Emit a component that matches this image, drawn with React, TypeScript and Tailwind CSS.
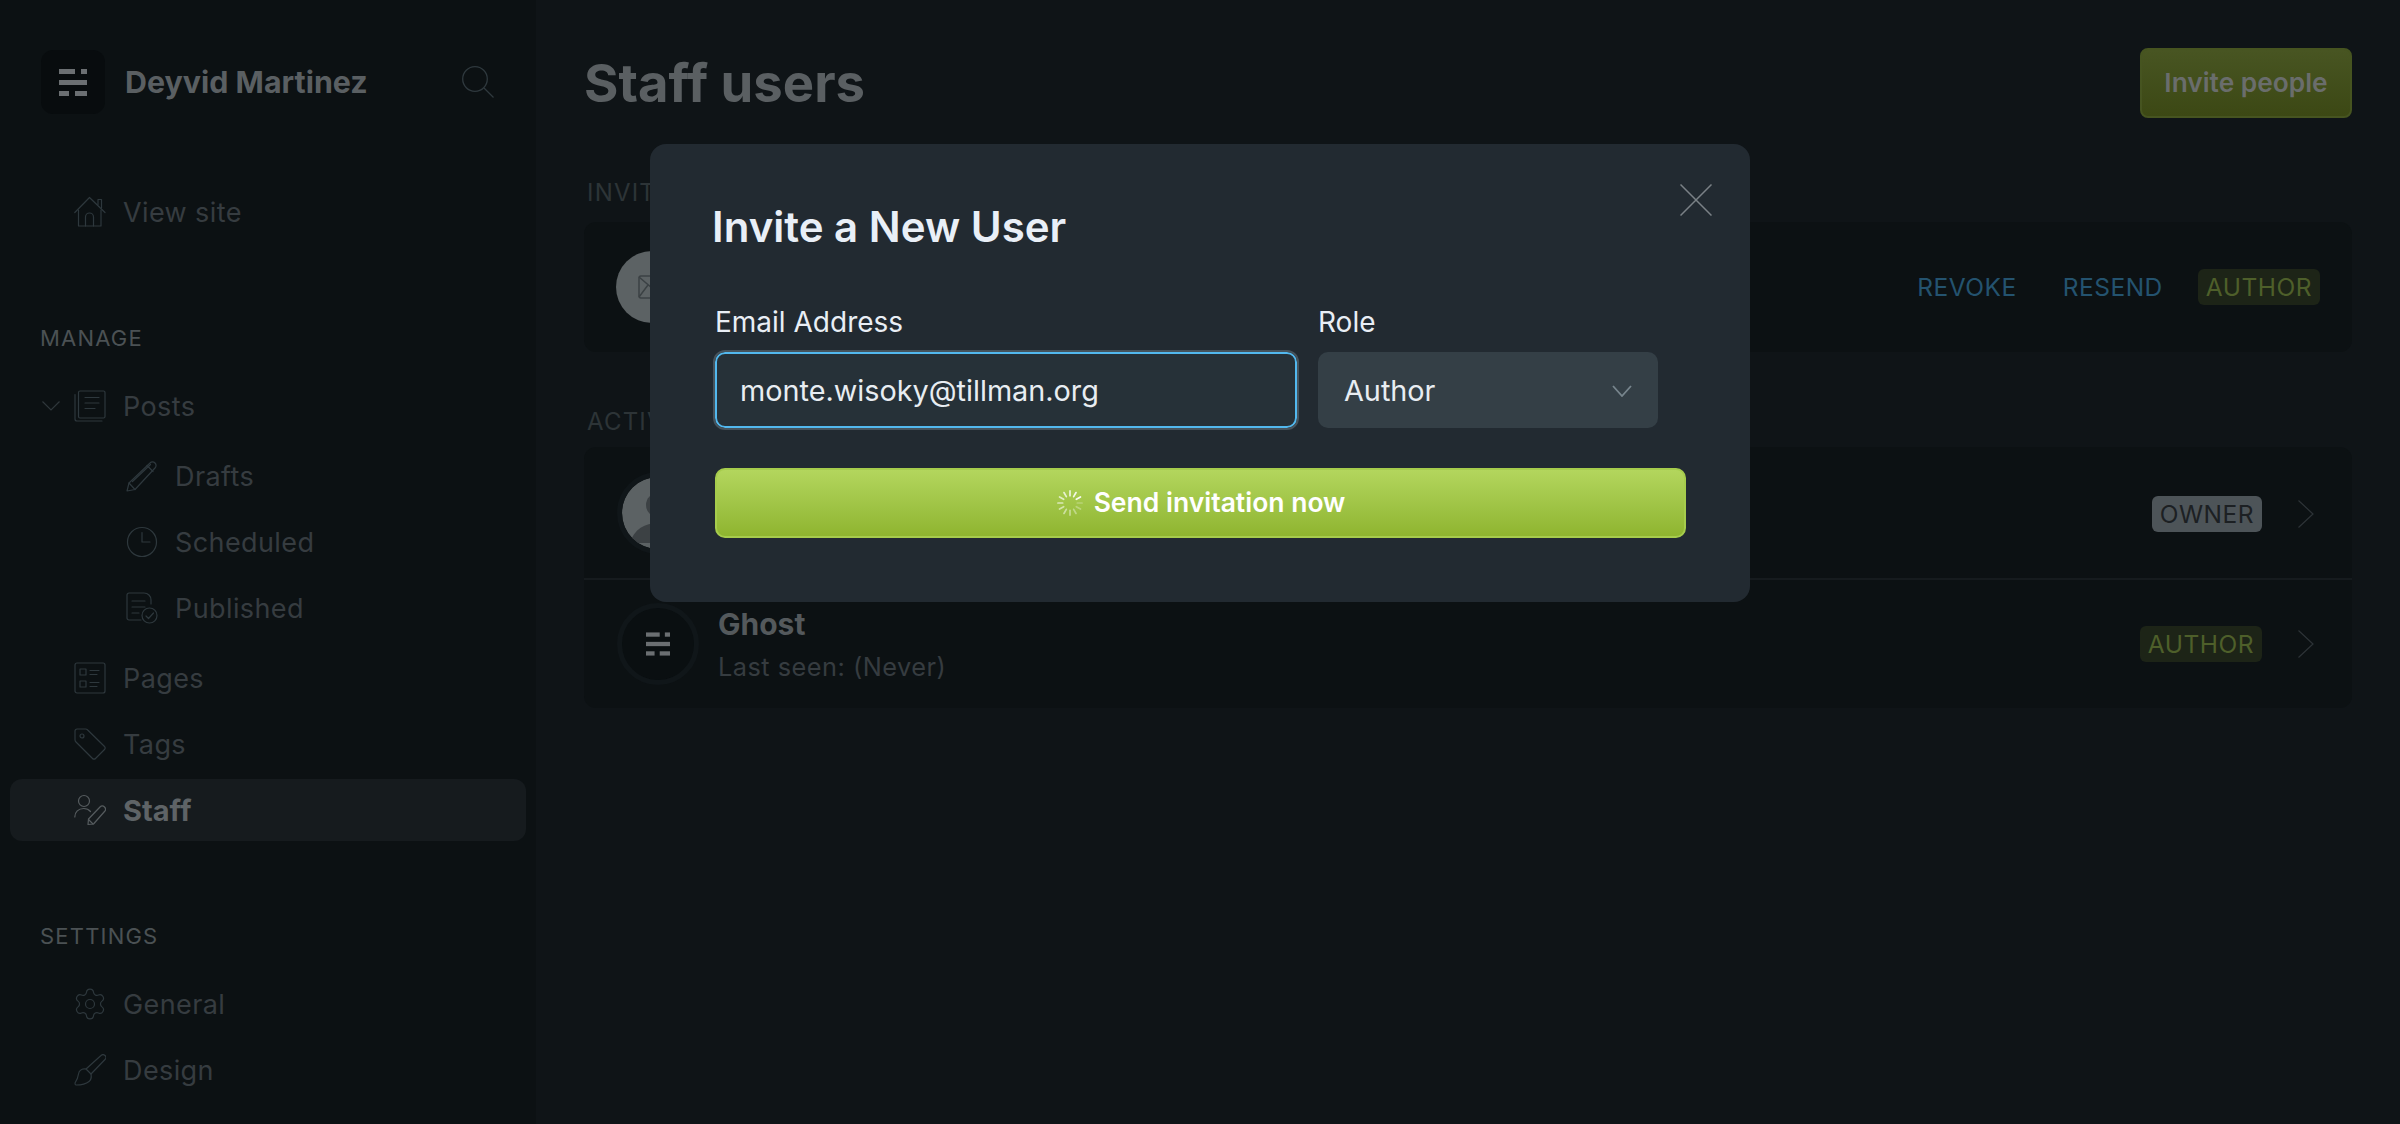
import React from 'react';
import { Settings } from 'lucide-react';

const Icon = ({ children, className = 'w-8 h-8' }: { children: React.ReactNode; className?: string }) => (
  <svg viewBox="0 0 32 32" fill="none" stroke="currentColor" strokeWidth="1.200" strokeLinecap="round" strokeLinejoin="round" className={`shrink-0 ${className}`}>
    {children}
  </svg>
);

const GhostMark = ({ className }: { className: string }) => (
  <svg viewBox="0 0 28 27" fill="currentColor" className={className}>
    <rect x="0" y="0" width="16" height="5" />
    <rect x="22" y="0" width="6" height="5" />
    <rect x="0" y="11" width="28" height="5" />
    <rect x="0" y="22" width="10" height="5" />
    <rect x="16" y="22" width="12" height="5" />
  </svg>
);

const HomeIcon = () => (
  <Icon>
    <path d="M0.800 16.500 15.500 1.500 31 16.500" />
    <path d="M24 8.500V3.500h3.500V12" />
    <path d="M4.500 14v16h22.500V14" />
    <path d="M11.500 30V21a4 4 0 0 1 8 0v9" />
  </Icon>
);
const PostsIcon = () => (
  <Icon>
    <rect x="4.500" y="1" width="26.500" height="27" rx="1.500" />
    <path d="M1 4.500V29a2 2 0 0 0 2 2h25" />
    <path d="M11 7.500h14M11 13h14M11 18.500h10" />
  </Icon>
);
const PenIcon = () => (
  <Icon>
    <path d="M1 31 3 23 24 3a3.500 3.500 0 0 1 5 0 3.500 3.500 0 0 1 0 5L9 29.500z" />
    <path d="M3 23 9 29.500M21 5.500 27 11.500M6.500 21.500 24.500 4.500" />
  </Icon>
);
const ClockIcon = () => (
  <Icon>
    <circle cx="16" cy="16" r="14.500" />
    <path d="M16 6.500V16h8" />
  </Icon>
);
const PublishedIcon = () => (
  <Icon>
    <path d="M15 28H3a2 2 0 0 1-2-2V3a2 2 0 0 1 2-2h15c4 0 7 3 7 7v4" />
    <path d="M6 9h13M6 15h13M6 21h7" />
    <circle cx="23.500" cy="23.500" r="7.500" />
    <path d="m20 24 2.500 2.500 5-5.500" />
  </Icon>
);
const PagesIcon = () => (
  <Icon>
    <rect x="1" y="1" width="30" height="30" rx="2" />
    <rect x="6" y="7" width="6" height="6" />
    <rect x="6" y="19" width="6" height="6" />
    <path d="M16 8.500h9M16 12.500h7M16 20.500h9M16 24.500h7" />
  </Icon>
);
const TagIcon = () => (
  <Icon>
    <path d="M1 3a2 2 0 0 1 2-2h8.500a3 3 0 0 1 2.200 1L30.500 18.500a2 2 0 0 1 0 3L21.500 30.500a2 2 0 0 1-3 0L2 14a3 3 0 0 1-1-2.200z" />
    <circle cx="8" cy="8" r="2" />
  </Icon>
);
const StaffIcon = () => (
  <Icon>
    <circle cx="10" cy="7" r="5.500" />
    <path d="M0.800 23c0-5 3.500-8.500 9-8.500 3 0 5 1 6.700 3" />
    <path d="M14 30.500l.5-5.500L26 13a3 3 0 0 1 4.500 4.500L19.500 30z" />
    <path d="M14.500 25.500 19 30" />
  </Icon>
);
const BrushIcon = () => (
  <Icon>
    <path d="M27 1.500a2.800 2.800 0 0 1 4 4L17 20l-5-5z" />
    <path d="M12 15c-4-.5-7 1.500-7.500 5-.4 3-1.500 6-3.500 9 0 1 0 2 1 2 5 0 10-1 13-3.500 2.500-2 2.500-5 2-7.500" />
  </Icon>
);

const NavRow = ({ icon, label, indent, active, chevron }: { icon: React.ReactNode; label: string; indent?: boolean; active?: boolean; chevron?: boolean }) => (
  <div className={`flex h-[62px] items-center rounded-xl ${active ? 'bg-[#161b1e] font-bold text-[#5e6366]' : 'text-[#363c40]'} ${indent ? 'pl-[116px]' : chevron ? 'pl-[32px]' : 'pl-[64px]'}`}>
    {chevron && (
      <svg viewBox="0 0 18 10" fill="none" stroke="#2f373b" strokeWidth="1.200" className="mr-[14px] h-[10px] w-[18px] shrink-0">
        <path d="M0.500 0.500 9 9l8.500-8.500" />
      </svg>
    )}
    <span className={active ? 'text-[#565c5f]' : 'text-[#2e383d]'}>{icon}</span>
    <span className={`ml-[17px] leading-none ${active ? 'text-[29px]' : 'text-[27px] tracking-[0.4px]'}`}>{label}</span>
  </div>
);

const SectionLabel = ({ children, className = '' }: { children: React.ReactNode; className?: string }) => (
  <div className={`pl-[30px] text-[22px] leading-[40px] tracking-[1.2px] text-[#4b5154] ${className}`}>{children}</div>
);

const Sidebar = () => (
  <aside className="h-[1124px] w-[536px] shrink-0 bg-[#0c1113] px-[10px] pt-[50px]">
    <div className="flex h-[64px] items-center pl-[31px]">
      <div className="flex h-[64px] w-[64px] items-center justify-center rounded-xl bg-[#080c0e] text-[#6b6f72]">
        <GhostMark className="h-[27px] w-[28px]" />
      </div>
      <div className="ml-[20px] text-[30.400px] font-bold leading-none text-[#5a5f62]">Deyvid Martinez</div>
      <svg viewBox="0 0 32 32" fill="none" stroke="#2f393e" strokeWidth="1.300" className="ml-auto mr-[32px] h-8 w-8">
        <circle cx="13" cy="13" r="12.300" />
        <path d="m22 22 9.500 9.500" />
      </svg>
    </div>
    <div className="mt-[67px]">
      <NavRow icon={<HomeIcon />} label="View site" />
    </div>
    <SectionLabel className="mt-[75px]">MANAGE</SectionLabel>
    <div className="mt-[17px] flex flex-col gap-1">
      <NavRow icon={<PostsIcon />} label="Posts" chevron />
      <div className="mt-1 flex flex-col gap-1">
        <NavRow icon={<PenIcon />} label="Drafts" indent />
        <NavRow icon={<ClockIcon />} label="Scheduled" indent />
        <NavRow icon={<PublishedIcon />} label="Published" indent />
      </div>
      <div className="mt-1 flex flex-col gap-1">
        <NavRow icon={<PagesIcon />} label="Pages" />
        <NavRow icon={<TagIcon />} label="Tags" />
        <NavRow icon={<StaffIcon />} label="Staff" active />
      </div>
    </div>
    <SectionLabel className="mt-[75px]">SETTINGS</SectionLabel>
    <div className="mt-[17px] flex flex-col gap-1">
      <NavRow icon={<Settings size={36} strokeWidth={0.8} className="-m-0.5" />} label="General" />
      <NavRow icon={<BrushIcon />} label="Design" />
    </div>
  </aside>
);

const Badge = ({ label, owner }: { label: string; owner?: boolean }) => (
  <span className={`flex h-9 items-center rounded-md px-2 pt-[1px] text-[24.500px] leading-none tracking-[0.5px] ${owner ? 'bg-[#4d5458] text-[#1c2023]' : 'bg-[#1d2417] text-[#4e5f2a]'}`}>
    {label}
  </span>
);

const RowChevron = () => (
  <svg viewBox="0 0 16 28" fill="none" stroke="#2d3337" strokeWidth="1.200" className="ml-[36px] h-7 w-4">
    <path d="M0.500 0.500 15 14 0.500 27.500" />
  </svg>
);

const Main = () => (
  <main className="h-[1124px] flex-1 bg-[#0f1417] px-[48px] pt-[48px]">
    <div className="flex h-[70px] items-center justify-between">
      <h1 className="text-[52.600px] font-bold leading-none text-[#5a5f62]">Staff users</h1>
      <button className="h-[70px] w-[212px] rounded-lg border-2 border-[#465420] bg-gradient-to-b from-[#485522] to-[#3c4814] text-[26.300px] font-semibold text-[#6a6d6c]">
        Invite people
      </button>
    </div>
    <div className="mt-[55px] pl-[3px] text-[24px] leading-[40px] tracking-[1.2px] text-[#2d3437]">INVITED USERS</div>
    <div className="mt-[9px] flex h-[130px] items-center rounded-xl bg-[#0c1113] pl-[32px] pr-[32px]">
      <div className="flex h-[72px] w-[72px] items-center justify-center rounded-full bg-[#5c6264]">
        <svg viewBox="0 0 28 24" fill="none" stroke="#3b4144" strokeWidth="1.500" className="h-6 w-7">
          <rect x="1" y="1" width="26" height="22" rx="2" />
          <path d="m1 2 13 11L27 2M1 22l9-12M27 22l-9-12" />
        </svg>
      </div>
      <div className="ml-[30px] text-[30px] text-[#3d4447]">monte.wisoky@tillman.org</div>
      <div className="ml-auto flex items-center text-[24.500px] leading-none tracking-[0.5px] text-[#24536f]">
        <span>REVOKE</span>
        <span className="ml-[46px]">RESEND</span>
        <span className="ml-[35px]"><Badge label="AUTHOR" /></span>
      </div>
    </div>
    <div className="mt-[50px] pl-[3px] text-[24px] leading-[40px] tracking-[1.2px] text-[#2d3437]">ACTIVE USERS</div>
    <div className="mt-[5px] rounded-xl bg-[#0c1113]">
      <div className="flex h-[133px] items-center border-b-2 border-[#161b1e] pl-[38px] pr-[38px]">
        <svg viewBox="0 0 72 72" className="h-[72px] w-[72px] rounded-full bg-[#5c6264] outline-[5px] outline-[#101619]">
          <circle cx="36" cy="28" r="12" fill="#3c4144" />
          <path d="M8 66c4-14 15-20 28-20s24 6 28 20z" fill="#3c4144" />
        </svg>
        <div className="ml-[24px] text-[30px] font-bold text-[#54595c]">Deyvid Martinez</div>
        <div className="ml-auto flex items-center pt-[2px]">
          <Badge label="OWNER" owner />
          <RowChevron />
        </div>
      </div>
      <div className="flex h-[128px] items-center pl-[38px] pr-[38px]">
        <div className="flex h-[72px] w-[72px] items-center justify-center rounded-full bg-[#0a0f11] text-[#6b6f72] outline-[5px] outline-[#101619]">
          <GhostMark className="h-[24px] w-[24px]" />
        </div>
        <div className="ml-[24px] mt-[3px]">
          <div className="text-[30px] font-bold leading-[36px] text-[#54595c]">Ghost</div>
          <div className="mt-[7px] text-[25.300px] leading-[36px] tracking-[0.5px] text-[#363c40]">Last seen: (Never)</div>
        </div>
        <div className="ml-auto flex items-center">
          <Badge label="AUTHOR" />
          <RowChevron />
        </div>
      </div>
    </div>
  </main>
);

const Spinner = () => (
  <svg viewBox="0 0 26 26" className="h-[28px] w-[28px]">
    {[...Array(12)].map((_, i) => (
      <rect key={i} x="12.200" y="1" width="1.600" height="6" rx="0.800" fill="#fff" opacity={0.25 + ((i + 9) % 12) * 0.06} transform={`rotate(${i * 30} 13 13)`} />
    ))}
  </svg>
);

const InviteModal = () => (
  <div className="absolute left-[650px] top-[144px] h-[458px] w-[1100px] rounded-2xl bg-[#222a31] pl-[65px] pr-[64px] pt-[57px]">
    <svg viewBox="0 0 32 32" fill="none" stroke="#7a8186" strokeWidth="1.500" className="absolute right-[38px] top-[40px] h-8 w-8">
      <path d="m0.500 0.500 31 31M31.500 0.500l-31 31" />
    </svg>
    <h2 className="-ml-[3px] text-[42px] font-semibold leading-[52px] text-[#e9eff7]">Invite a New User</h2>
    <div className="mt-[52px] flex gap-[21px]">
      <div>
        <label className="block text-[28px] font-normal leading-[34px] text-[#e9eef5]">Email Address</label>
        <div className="mt-[13px] flex h-[76px] w-[582px] items-center rounded-[10px] border-2 border-[#52b8ee] bg-[#263138] pl-[23px] pt-[2px] text-[28.800px] text-[#e8edf2] outline-2 outline-[#46535c]">
          monte.wisoky@tillman.org
        </div>
      </div>
      <div>
        <label className="block text-[28px] font-normal leading-[34px] text-[#e9eef5]">Role</label>
        <div className="mt-[13px] flex h-[76px] w-[340px] items-center justify-between rounded-[10px] bg-[#343f46] pl-[26px] pr-[26px] pt-[2px] text-[28.800px] text-[#e8edf2]">
          <span>Author</span>
          <svg viewBox="0 0 20 12" fill="none" stroke="#77858d" strokeWidth="1.800" className="h-3 w-5">
            <path d="m1 1 9 10 9-10" />
          </svg>
        </div>
      </div>
    </div>
    <button className="mt-[40px] flex h-[70px] w-[971px] items-center justify-center gap-[10px] rounded-[10px] border-2 border-[#a6cc4c] bg-gradient-to-b from-[#b3d65d] to-[#8fb52f] text-[26.500px] font-semibold text-white">
      <Spinner />
      <span>Send invitation now</span>
    </button>
  </div>
);

export default function App() {
  return (
    <div className="relative flex h-[1124px] w-[2400px] overflow-hidden font-['Inter',sans-serif]">
      <Sidebar />
      <Main />
      <InviteModal />
    </div>
  );
}
